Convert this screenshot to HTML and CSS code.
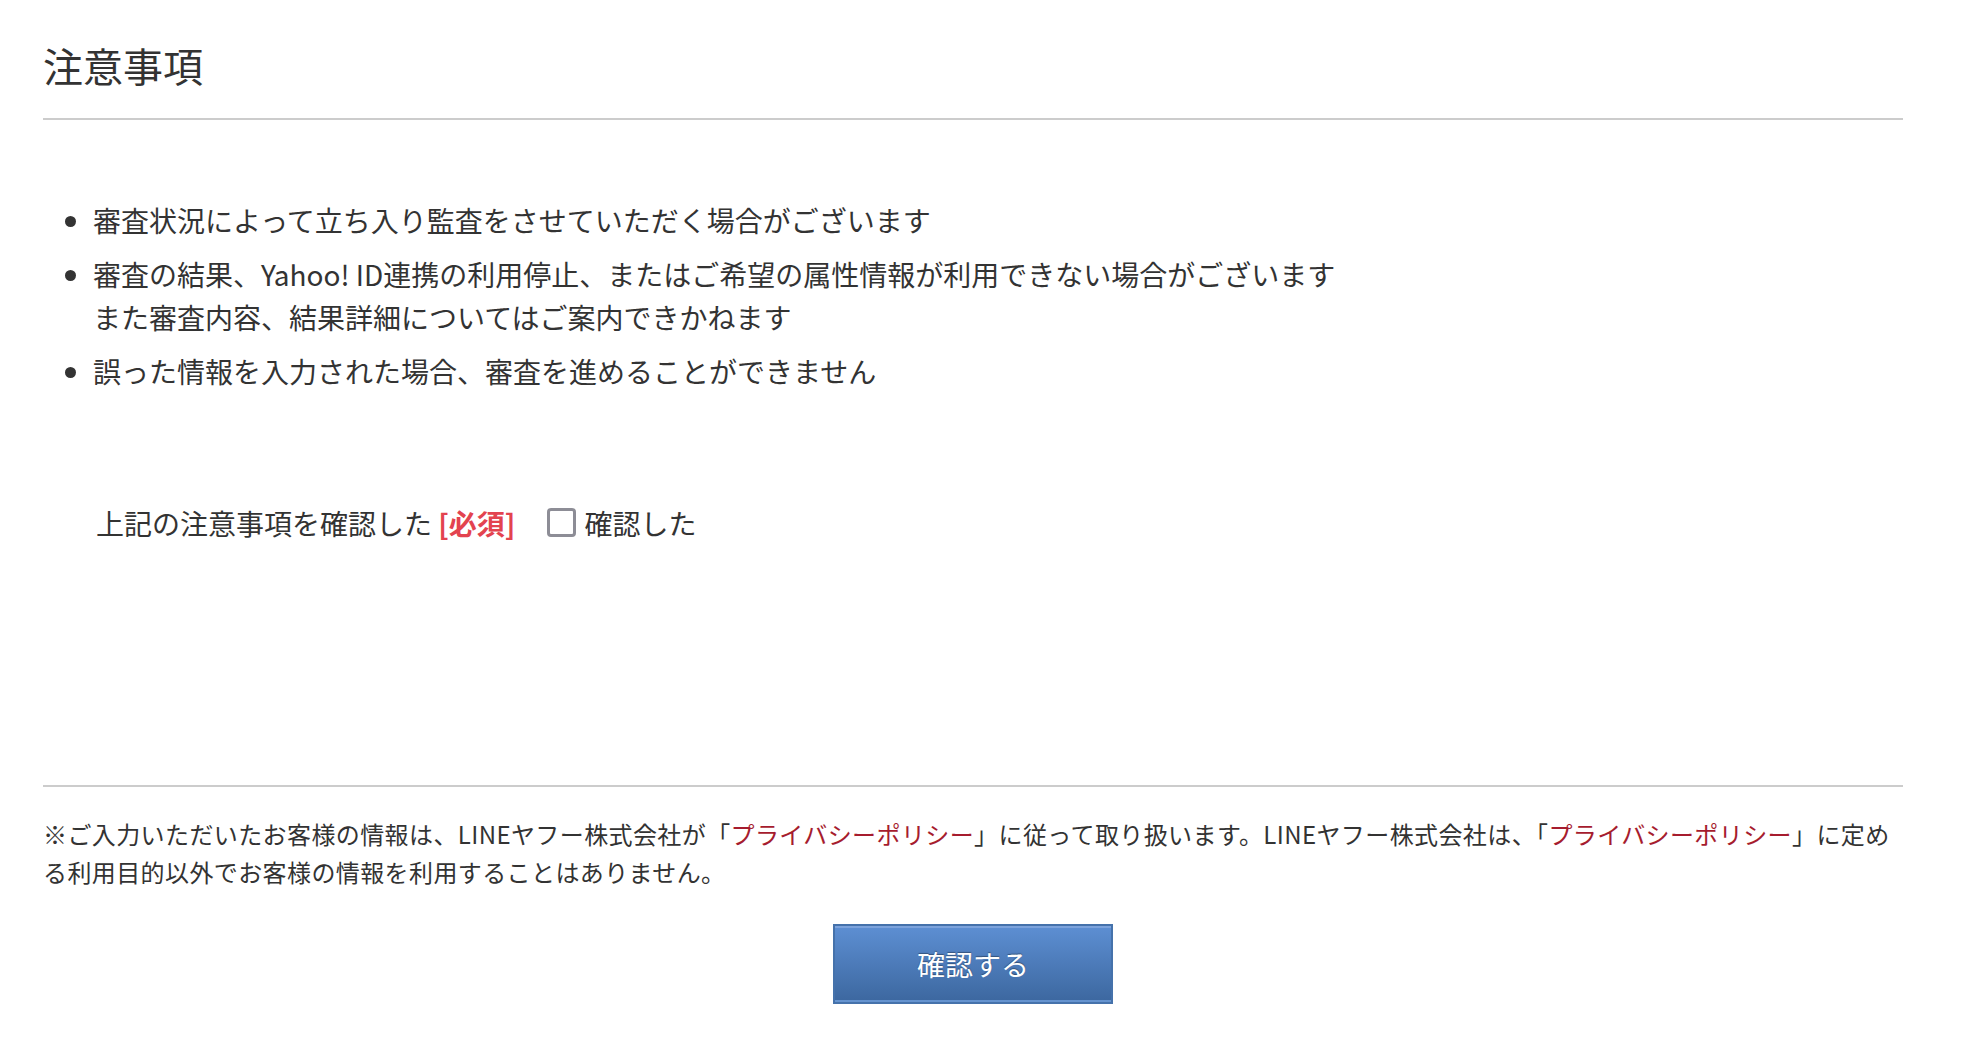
FILE: index.html
```html
<!DOCTYPE html>
<html lang="ja">
<head>
    <meta charset="UTF-8">
    <meta name="viewport" content="width=device-width, initial-scale=1.0">
    <title>注意事項</title>
    <link rel="stylesheet" href="styles.css">
</head>
<body>
    <div class="page">
        <section class="notice">
            <h1>注意事項</h1>
            <ul class="notice-list">
                <li>審査状況によって立ち入り監査をさせていただく場合がございます</li>
                <li>審査の結果、Yahoo! ID連携の利用停止、またはご希望の属性情報が利用できない場合がございます<br>また審査内容、結果詳細についてはご案内できかねます</li>
                <li>誤った情報を入力された場合、審査を進めることができません</li>
            </ul>
            <div class="confirm-row">
                <span class="confirm-label">上記の注意事項を確認した <span class="required">[必須]</span></span>
                <label class="check">
                    <input type="checkbox" name="agree">
                    <span>確認した</span>
                </label>
            </div>
        </section>
        <footer class="footer">
            <p class="privacy">※ご入力いただいたお客様の情報は、LINEヤフー株式会社が「<a href="#">プライバシーポリシー</a>」に従って取り扱います。LINEヤフー株式会社は、「<a href="#">プライバシーポリシー</a>」に定め<br>る利用目的以外でお客様の情報を利用することはありません。</p>
            <div class="actions">
                <button type="button" class="submit-btn">確認する</button>
            </div>
        </footer>
    </div>
</body>
</html>
```

FILE: styles.css
```css
* {
    margin: 0;
    padding: 0;
    box-sizing: border-box;
}
body {
    background: #fff;
    color: #333;
    font-family: "Noto Sans CJK JP", "Noto Sans", sans-serif;
}
.page {
    padding: 0 61px 0 43px;
}
.notice h1 {
    font-size: 40px;
    font-weight: normal;
    line-height: 48px;
    padding-top: 41px;
    padding-bottom: 29px;
    border-bottom: 2px solid #ccc;
}
.notice-list {
    list-style: disc;
    padding-left: 50px;
    margin-top: 79px;
    font-size: 28px;
    line-height: 43px;
}
.notice-list li {
    margin-bottom: 11px;
}
.confirm-row {
    display: flex;
    align-items: center;
    padding-left: 53px;
    margin-top: 107px;
    height: 45px;
    font-size: 28px;
}
.required {
    color: #e3434f;
    font-weight: bold;
}
.check {
    display: flex;
    align-items: center;
    margin-left: 32px;
    cursor: pointer;
}
.check input {
    appearance: none;
    width: 29px;
    height: 29px;
    border: 3px solid #8d8d96;
    border-radius: 4px;
    background: #fff;
    margin-right: 8px;
}
.footer {
    margin-top: 240px;
    border-top: 2px solid #ccc;
    padding-top: 28px;
}
.privacy {
    font-size: 24px;
    line-height: 38px;
    letter-spacing: 0.4px;
}
.privacy a {
    color: #a61c2e;
    text-decoration: none;
}
.actions {
    display: flex;
    justify-content: center;
    margin-top: 33px;
}
.submit-btn {
    width: 280px;
    height: 80px;
    font-family: inherit;
    font-size: 28px;
    color: #fff;
    text-shadow: 0 -1px 1px rgba(0, 0, 0, 0.35);
    background: linear-gradient(#5d8fd3, #3c679f);
    border: 2px solid #4572ab;
    box-shadow: inset 0 2px 0 #7ca3dc, inset 0 -2px 0 #6593cf;
    cursor: pointer;
}
.submit-btn:hover {
    background: linear-gradient(#6699dc, #4571aa);
}
```
